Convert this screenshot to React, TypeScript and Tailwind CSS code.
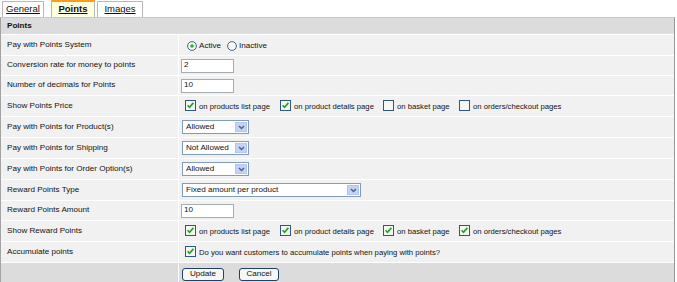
import React from 'react'

const Check = ({ on }: { on: boolean }) => (
    <svg width="11" height="11" viewBox="0 0 11 11" className="shrink-0">
        <rect x="0.5" y="0.5" width="10" height="10" fill="#f6f6f2" stroke="#2f5680" />
        {on && <path d="M2.6 5.2 L4.5 7.3 L8.4 2.9" stroke="#22a322" strokeWidth="1.7" fill="none" />}
    </svg>
)

const Radio = ({ on }: { on: boolean }) => (
    <svg width="10" height="10" viewBox="0 0 10 10" className="shrink-0">
        <circle cx="5" cy="5" r="4.4" fill="#f6f6f2" stroke="#2f5680" strokeWidth="0.9" />
        {on && <circle cx="5" cy="5" r="1.8" fill="#2ab52a" />}
    </svg>
)

const Select = ({ value, w }: { value: string; w: string }) => (
    <div className={`${w} h-[14px] border border-[#7f9db9] bg-white flex items-center justify-between pl-[3px] pr-px`}>
        <span>{value}</span>
        <div className="w-[12px] h-[10px] bg-[#c3d3f7] border border-[#b4c6ef] flex items-center justify-center">
            <svg width="7" height="5" viewBox="0 0 7 5">
                <path d="M1 1 L3.5 3.6 L6 1" stroke="#4d6185" strokeWidth="1.4" fill="none" />
            </svg>
        </div>
    </div>
)

const Field = ({ value }: { value: string }) => (
    <div className="w-[53px] h-[14px] border border-[#a5acb2] bg-white flex items-center pl-[2px]">{value}</div>
)

const Opt = ({ on, text, w }: { on: boolean; text: string; w: string }) => (
    <div className={`${w} flex items-center gap-[3px]`}>
        <Check on={on} />
        <span className="pt-[2px] text-[7.7px]">{text}</span>
    </div>
)

const Row = ({ label, h, children }: { label: string; h: string; children: React.ReactNode }) => (
    <div className={`grid grid-cols-[177px_1fr] gap-px ${h}`}>
        <div className="bg-[#f1f1f1] pl-[6px] flex items-center">{label}</div>
        <div className="bg-[#f1f1f1] flex items-center">{children}</div>
    </div>
)

const Button = ({ text, w }: { text: string; w: string }) => (
    <div className={`${w} h-[13px] rounded-[3px] border border-[#1f3f6e] bg-[#f7f7f3] flex items-center justify-center`}>
        {text}
    </div>
)

const pages = ['on products list page', 'on product details page', 'on basket page', 'on orders/checkout pages']
const widths = ['w-[95px]', 'w-[103px]', 'w-[76px]', 'w-[110px]']

const App = () => {
    return (
        <div className="w-[677px] h-[282px] bg-white overflow-hidden font-['Liberation_Sans',sans-serif] text-[8.1px] text-[#111]">
            <div className="flex items-end h-[17px] text-[9.5px]">
                <div className="ml-[2px] w-[42px] h-[16px] border border-b-0 border-[#b8b8b8] bg-white flex items-center justify-center underline">
                    General
                </div>
                <div className="ml-[7px] w-[44px] h-[17px] border-x border-[#b8b8b8] border-t-2 border-t-[#ff9c1a] bg-[#ffffe2] flex items-center justify-center font-bold underline">
                    Points
                </div>
                <div className="ml-[2px] w-[46px] h-[16px] border border-b-0 border-[#b8b8b8] bg-white flex items-center justify-center underline">
                    Images
                </div>
            </div>
            <div className="w-[675px] border-t border-t-[#c8c8c8] border-l border-l-[#a3a3a3] border-r border-r-[#999] bg-white flex flex-col gap-px">
                <div className="h-[16px] bg-[#dcdcdc] pl-[6px] flex items-center font-bold">Points</div>
                <Row label="Pay with Points System" h="h-[20px]">
                    <div className="flex items-center pl-[8px] pt-[3px]">
                        <Radio on />
                        <span className="ml-[2px]">Active</span>
                        <span className="ml-[6px]"><Radio on={false} /></span>
                        <span className="ml-[2px]">Inactive</span>
                    </div>
                </Row>
                <Row label="Conversion rate for money to points" h="h-[19px]">
                    <div className="pl-[2px]"><Field value="2" /></div>
                </Row>
                <Row label="Number of decimals for Points" h="h-[19px]">
                    <div className="pl-[2px]"><Field value="10" /></div>
                </Row>
                <Row label="Show Points Price" h="h-[20px]">
                    <div className="flex pl-[6px]">
                        {pages.map((p, i) => (
                            <Opt key={p} on={i < 2} text={p} w={widths[i]} />
                        ))}
                    </div>
                </Row>
                <Row label="Pay with Points for Product(s)" h="h-[20px]">
                    <div className="pl-[3px]"><Select value="Allowed" w="w-[67px]" /></div>
                </Row>
                <Row label="Pay with Points for Shipping" h="h-[20px]">
                    <div className="pl-[3px]"><Select value="Not Allowed" w="w-[67px]" /></div>
                </Row>
                <Row label="Pay with Points for Order Option(s)" h="h-[20px]">
                    <div className="pl-[3px]"><Select value="Allowed" w="w-[67px]" /></div>
                </Row>
                <Row label="Reward Points Type" h="h-[20px]">
                    <div className="pl-[3px]"><Select value="Fixed amount per product" w="w-[179px]" /></div>
                </Row>
                <Row label="Reward Points Amount" h="h-[19px]">
                    <div className="pl-[2px]"><Field value="10" /></div>
                </Row>
                <Row label="Show Reward Points" h="h-[20px]">
                    <div className="flex pl-[6px]">
                        {pages.map((p, i) => (
                            <Opt key={p} on text={p} w={widths[i]} />
                        ))}
                    </div>
                </Row>
                <Row label="Accumulate points" h="h-[20px]">
                    <div className="flex pl-[6px]">
                        <Opt on text="Do you want customers to accumulate points when paying with points?" w="w-[300px]" />
                    </div>
                </Row>
                <div className="grid grid-cols-[177px_1fr] gap-px h-[20px]">
                    <div className="bg-[#dcdcdc]" />
                    <div className="bg-[#dcdcdc] flex items-center gap-[15px] pl-[3px] pt-[2px]">
                        <Button text="Update" w="w-[42px]" />
                        <Button text="Cancel" w="w-[40px]" />
                    </div>
                </div>
            </div>
        </div>
    )
}

export default App
